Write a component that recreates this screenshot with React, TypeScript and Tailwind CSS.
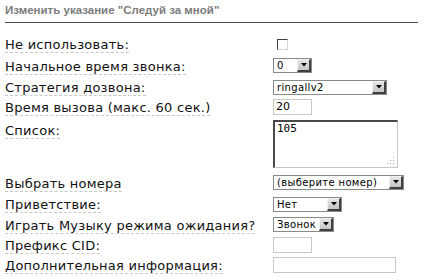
import type { ReactNode } from 'react';

function Label({ children }: { children: ReactNode }) {
  return (
    <span className="border-b border-dashed border-[#c8c8c8] text-[13px] leading-[15px] tracking-[0.25px] text-[#111]">
      {children}
    </span>
  );
}

function Select({ value, width }: { value: string; width: string }) {
  return (
    <div
      className={`flex h-[15px] items-center justify-between border border-[#8a8a8a] bg-white pl-[3px] ${width}`}
    >
      <span className="text-[10px] leading-[13px] tracking-[0.35px] text-black">{value}</span>
      <span className="flex h-[13px] w-[14px] items-center justify-center border-t border-l border-r-2 border-b-2 border-t-[#f2f2f2] border-l-[#f2f2f2] border-r-[#404040] border-b-[#404040] bg-gradient-to-b from-[#e6e6e6] to-[#c4c4c4]">
        <svg width="6" height="4" viewBox="0 0 6 4" aria-hidden="true">
          <path d="M0 0h6L3 3.5Z" fill="#000" />
        </svg>
      </span>
    </div>
  );
}

function Row({
  label,
  height,
  children,
  top = false
}: {
  label: ReactNode;
  height: string;
  children: ReactNode;
  top?: boolean;
}) {
  return (
    <div className={`flex ${height} ${top ? 'items-start' : 'items-center'}`}>
      <div className={`w-[268px] ${top ? 'pt-[1px]' : ''}`}>
        <Label>{label}</Label>
      </div>
      <div className={top ? 'pt-[3px]' : ''}>{children}</div>
    </div>
  );
}

export default function App() {
  return (
    <div className="h-[277px] w-[436px] bg-white pl-[5px] font-['DejaVu_Sans',sans-serif]">
      <div className="pt-[4px] font-['Liberation_Sans',Arial,sans-serif] text-[11.5px] font-bold leading-[13px] text-[#7c7c7c]">
        Изменить указание "Следуй за мной"
      </div>
      <div className="mt-[5px] h-[1px] w-[413px] bg-[#4a4a4a]" />

      <div className="pt-[11px]">
        <Row label="Не использовать:" height="h-[20px]">
          <div className="ml-[4px] h-[11px] w-[11px] border-t border-l border-r border-b border-t-[#404040] border-l-[#404040] border-r-[#d4d4d4] border-b-[#d4d4d4] bg-white" />
        </Row>
        <Row label="Начальное время звонка:" height="h-[23px]">
          <Select value="0" width="w-[39px]" />
        </Row>
        <Row label="Стратегия дозвона:" height="h-[20px]">
          <Select value="ringallv2" width="w-[114px]" />
        </Row>
        <Row label="Время вызова (макс. 60 сек.)" height="h-[20px]">
          <div className="flex h-[16px] w-[39px] items-center border border-[#c8c8c8] pl-[2px] text-[11px] text-black">
            20
          </div>
        </Row>
        <Row label="Список:" height="h-[55px]" top>
          <div className="relative h-[48px] w-[125px] border-t-2 border-l-2 border-r border-b border-t-[#4a4a4a] border-l-[#4a4a4a] border-r-[#c8c8c8] border-b-[#c8c8c8] bg-white pl-[2px] font-['DejaVu_Sans_Mono',monospace] text-[11px] leading-[14px] text-black">
            105
            <svg className="absolute right-[2px] bottom-[2px]" width="8" height="8" viewBox="0 0 8 8" aria-hidden="true">
              <rect x="6" y="0" width="1" height="1" fill="#b0b0b0" />
              <rect x="3" y="3" width="1" height="1" fill="#b0b0b0" />
              <rect x="6" y="3" width="1" height="1" fill="#b0b0b0" />
              <rect x="0" y="6" width="1" height="1" fill="#b0b0b0" />
              <rect x="3" y="6" width="1" height="1" fill="#b0b0b0" />
              <rect x="6" y="6" width="1" height="1" fill="#b0b0b0" />
            </svg>
          </div>
        </Row>
        <Row label="Выбрать номера" height="h-[21px]">
          <Select value="(выберите номер)" width="w-[131px]" />
        </Row>
        <Row label="Приветствие:" height="h-[22px]">
          <Select value="Нет" width="w-[69px]" />
        </Row>
        <Row label="Играть Музыку режима ожидания?" height="h-[19px]">
          <Select value="Звонок" width="w-[61px]" />
        </Row>
        <Row label="Префикс CID:" height="h-[22px]">
          <div className="h-[16px] w-[39px] border border-[#c8c8c8]" />
        </Row>
        <Row label="Дополнительная информация:" height="h-[18px]">
          <div className="h-[16px] w-[123px] border border-[#c8c8c8]" />
        </Row>
      </div>
    </div>
  );
}
